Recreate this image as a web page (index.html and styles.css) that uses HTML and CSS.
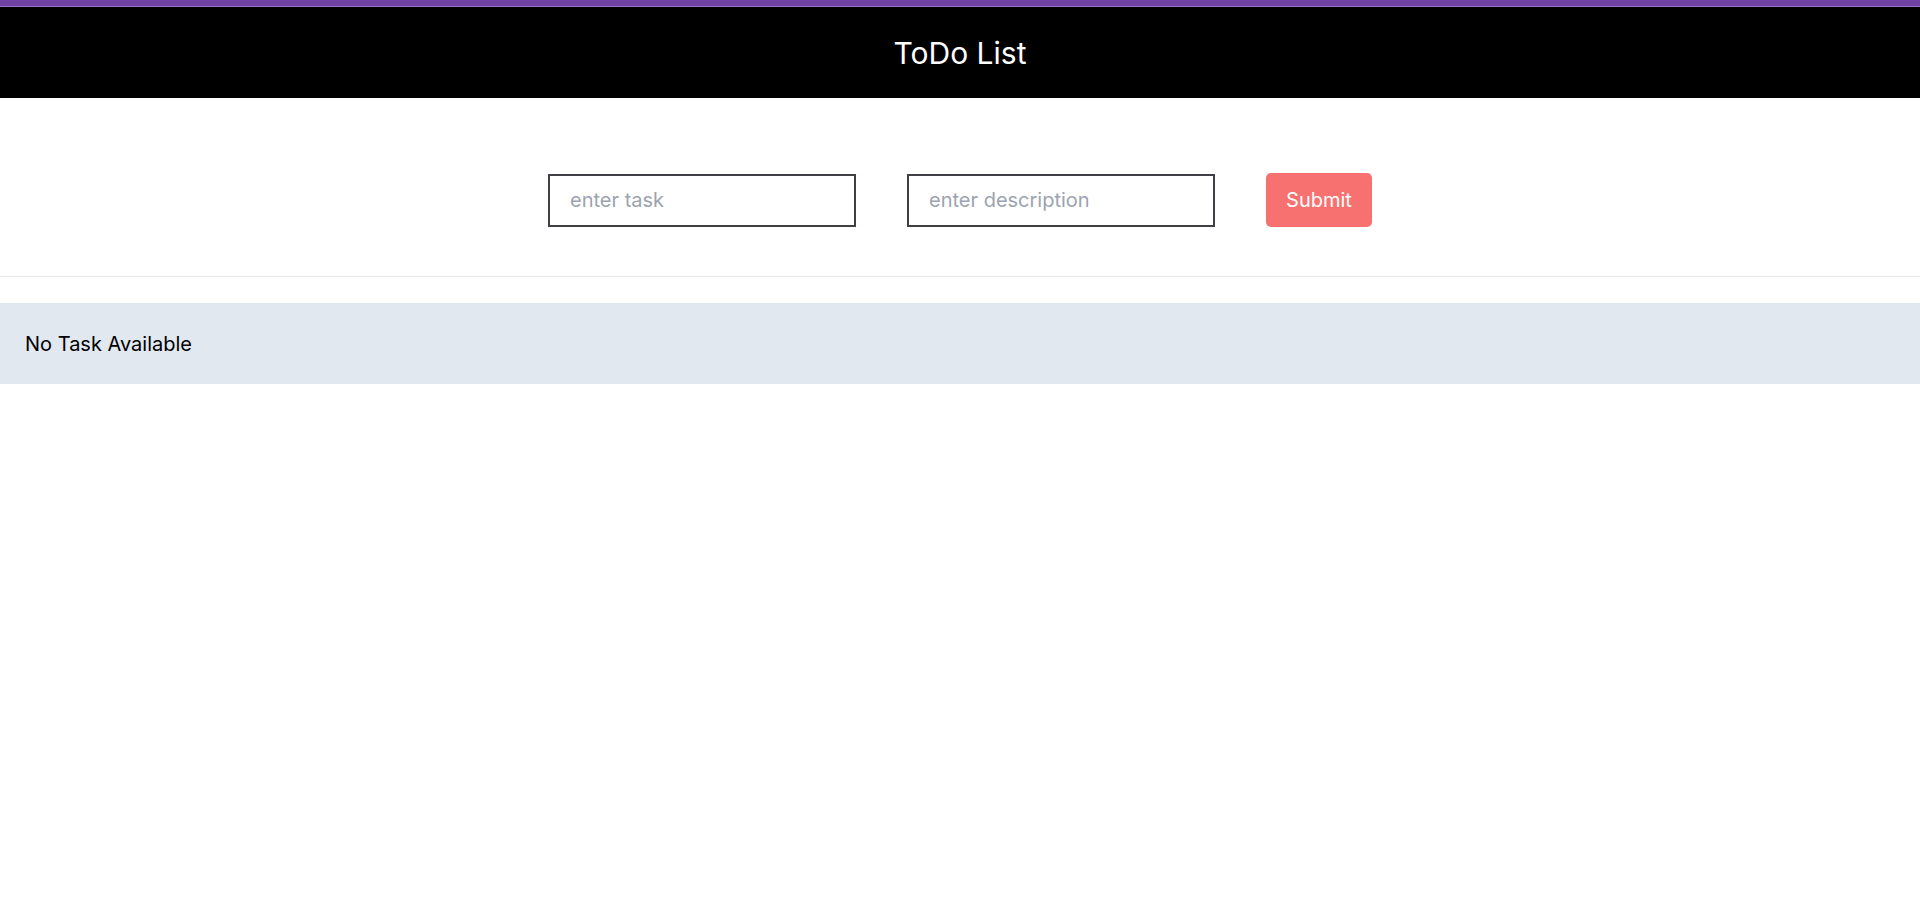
FILE: index.html
```html
<!DOCTYPE html>
<html lang="en">
<head>
<meta charset="utf-8">
<title>ToDo List</title>
<link rel="stylesheet" href="styles.css">
</head>
<body>
<div class="topbar"></div>
<header class="header">
  <h1 class="title">ToDo List</h1>
</header>
<form class="todo-form">
  <input class="field" type="text" placeholder="enter task">
  <input class="field" type="text" placeholder="enter description">
  <button class="submit" type="button">Submit</button>
</form>
<hr class="divider">
<div class="empty">No Task Available</div>
</body>
</html>
```
FILE: styles.css
```css
* { box-sizing: border-box; }
html, body { margin: 0; padding: 0; background: #ffffff; }
body { font-family: Inter, "Noto Sans", "Liberation Sans", sans-serif; color: #000; }

.topbar {
  height: 7px;
  background: linear-gradient(#6f42a1 0, #6f42a1 6px, #9a72c2 6px, #9a72c2 7px);
}

.header {
  height: 91px;
  background: #000;
  display: flex;
  align-items: center;
  justify-content: center;
}

.title {
  margin: 0;
  color: #fff;
  font-size: 30px;
  font-weight: 400;
  line-height: 1;
}

.todo-form {
  display: flex;
  justify-content: center;
  align-items: center;
  gap: 51px;
  padding: 75px 0 49px;
}

.field {
  width: 308px;
  height: 53px;
  border: 2px solid #3f3f46;
  padding: 0 20px;
  font-family: inherit;
  font-size: 20px;
  color: #111;
  outline: none;
  border-radius: 0;
  background: #fff;
}
.field::placeholder { color: #9ca3af; }

.submit {
  width: 106px;
  height: 54px;
  border: none;
  border-radius: 5px;
  background: #f87171;
  color: #fff;
  font-family: inherit;
  font-size: 20px;
  padding: 0;
}

.divider {
  margin: 0;
  border: none;
  border-top: 1px solid #e5e7eb;
}

.empty {
  margin-top: 26px;
  height: 81px;
  background: #e2e8f0;
  display: flex;
  align-items: center;
  padding-left: 25px;
  font-size: 20px;
}
```
